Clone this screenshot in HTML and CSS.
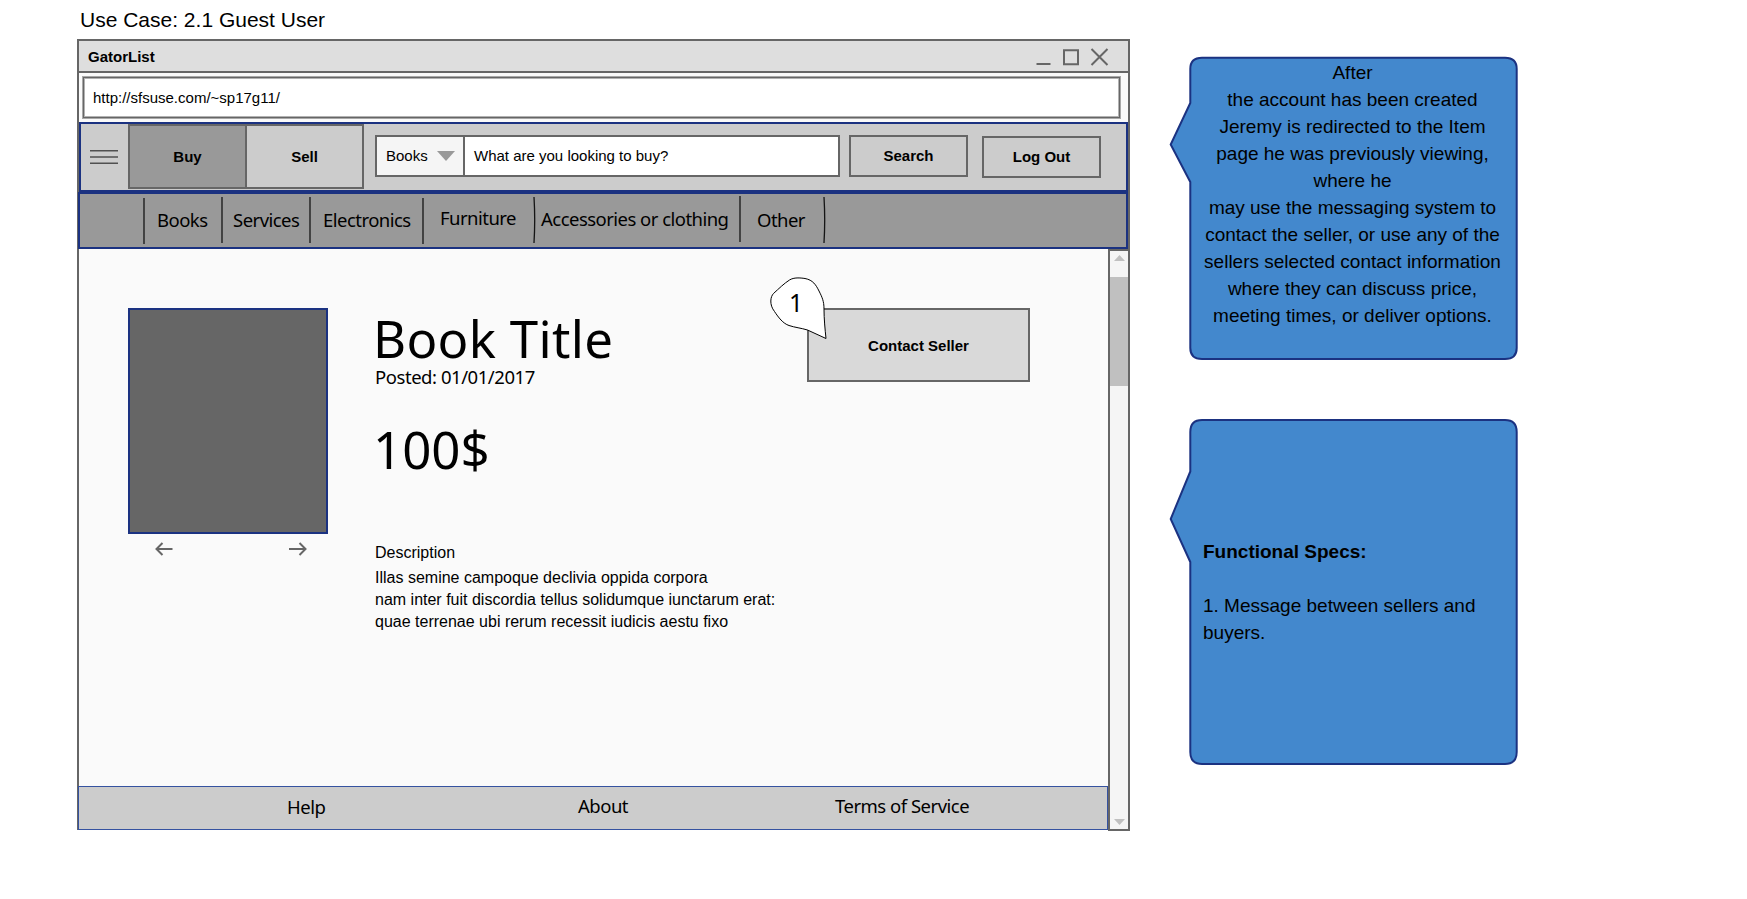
FILE: index.html
```html
<!DOCTYPE html>
<html lang="en">
<head>
<meta charset="utf-8">
<title>GatorList</title>
<link rel="stylesheet" href="styles.css">
</head>
<body>
<div class="page">
  <main class="wireframe">
    <h1 class="use-case">Use Case: 2.1 Guest User</h1>
    <div class="window">
      <div class="titlebar">
        <span class="app-name">GatorList</span>
        <svg class="window-controls" width="73" height="18" viewBox="0 0 73 18">
          <path d="M0.5 16H14.5M28 2.2h14v14H28z" fill="none" stroke="#666" stroke-width="2"/>
          <path d="M55.5 1 L71.5 17M71.5 1 L55.5 17" stroke="#666" stroke-width="2"/>
        </svg>
      </div>
      <div class="urlbar">http://sfsuse.com/~sp17g11/</div>
      <div class="toolbar">
        <svg class="menu-icon" width="28" height="14" viewBox="0 0 28 14">
          <path d="M0 .8H28M0 7H28M0 13.2H28" stroke="#505050" stroke-width="1.5"/>
        </svg>
        <div class="tabs">
          <div class="tab tab-active">Buy</div>
          <div class="tab">Sell</div>
        </div>
        <div class="search-box">
          <div class="category">Books
            <svg width="18" height="10" viewBox="0 0 18 10"><path d="M0 0H18L9 10z" fill="#999"/></svg>
          </div>
          <div class="query">What are you looking to buy?</div>
        </div>
        <div class="button search">Search</div>
        <div class="button logout">Log Out</div>
      </div>
      <nav class="categories">
        <svg class="rule rule-1" width="4" height="46" viewBox="0 0 4 46"><path d="M2 0V46"/></svg>
        <span class="cat cat-books">Books</span>
        <svg class="rule" width="4" height="46" viewBox="0 0 4 46"><path d="M2 0V46"/></svg>
        <span class="cat cat-services">Services</span>
        <svg class="rule" width="4" height="46" viewBox="0 0 4 46"><path d="M2 0V46"/></svg>
        <span class="cat cat-electronics">Electronics</span>
        <svg class="rule rule-low" width="4" height="46" viewBox="0 0 4 46"><path d="M2 0V46"/></svg>
        <span class="cat cat-furniture">Furniture</span>
        <svg class="rule" width="4" height="46" viewBox="0 0 4 46"><path d="M2 0Q3.4 23 2 46"/></svg>
        <span class="cat cat-accessories">Accessories or clothing</span>
        <svg class="rule rule-high" width="4" height="46" viewBox="0 0 4 46"><path d="M2 0V46"/></svg>
        <span class="cat cat-other">Other</span>
        <svg class="rule" width="4" height="46" viewBox="0 0 4 46"><path d="M2 0Q3.4 23 2 46"/></svg>
      </nav>
      <div class="viewport">
        <div class="document">
          <section class="item">
            <div class="gallery">
              <div class="photo"></div>
              <div class="arrows">
                <svg width="18" height="14" viewBox="0 0 18 14"><path d="M17.5 7H1.5M7.5 1L1.5 7L7.5 13" fill="none" stroke="#666" stroke-width="2"/></svg>
                <svg width="18" height="14" viewBox="0 0 18 14"><path d="M0 7H16.5M10.5 1L16.5 7L10.5 13" fill="none" stroke="#666" stroke-width="2"/></svg>
              </div>
            </div>
            <div class="details">
              <h2 class="item-title">Book Title</h2>
              <div class="posted">Posted: 01/01/2017</div>
              <div class="price">100$</div>
              <div class="description-label">Description</div>
              <p class="description">Illas semine campoque declivia oppida corpora<br>nam inter fuit discordia tellus solidumque iunctarum erat:<br>quae terrenae ubi rerum recessit iudicis aestu fixo</p>
            </div>
            <div class="contact">Contact Seller
              <div class="marker">
                <svg width="58" height="64" viewBox="0 0 58 64"><path d="M56 61.5 L37.5 53 C31 51 25 50.5 19 48.5 C13 46.5 8.5 40.5 4.5 34.5 C-1 27.5 .5 19.500 3.500 16.500 C9 11.500 14 6.500 19.500 3 C24 .2 30 .8 35 1.500 C43 3 46 8 49 14 C52 20 54 24 54 32 C54 42 55 52 56 61.500z" fill="#fff" stroke="#000" stroke-width="1"/></svg>
                <span class="marker-label">1</span>
              </div>
            </div>
          </section>
          <footer class="footer">
            <span class="foot foot-help">Help</span>
            <span class="foot foot-about">About</span>
            <span class="foot foot-terms">Terms of Service</span>
          </footer>
        </div>
        <div class="scrollbar">
          <svg width="11" height="6" viewBox="0 0 11 6"><path d="M0 6L5.500 0L11 6z" fill="#c0c0c0"/></svg>
          <div class="thumb"></div>
          <svg class="scroll-down" width="11" height="6" viewBox="0 0 11 6"><path d="M0 0H11L5.500 6z" fill="#c0c0c0"/></svg>
        </div>
      </div>
    </div>
  </main>
  <aside class="notes">
    <div class="note note-story">
      <svg class="note-shape" width="350" height="306" viewBox="1169 56 350 306"><path d="M1202 57.800H1505Q1516.700 57.800 1516.700 69V348Q1516.700 359 1505 359H1202Q1190.300 359 1190.300 348V182L1170.700 144.500L1190.300 103V69Q1190.300 57.800 1202 57.800z"/></svg>
      <p class="note-text">After<br>the account has been created<br>Jeremy is redirected to the Item<br>page he was previously viewing,<br>where he<br>may use the messaging system to<br>contact the seller, or use any of the<br>sellers selected contact information<br>where they can discuss price,<br>meeting times, or deliver options.</p>
    </div>
    <div class="note note-specs">
      <svg class="note-shape" width="350" height="348" viewBox="1169 418 350 348"><path d="M1202 420H1505Q1516.700 420 1516.700 432V752Q1516.700 764 1505 764H1202Q1190.300 764 1190.300 752V562L1170.700 519L1190.300 471.500V432Q1190.300 420 1202 420z"/></svg>
      <p class="note-text"><strong>Functional Specs:</strong><br><br>1. Message between sellers and<br>buyers.</p>
    </div>
  </aside>
</div>
</body>
</html>
```
FILE: styles.css
```css
* { box-sizing: border-box; }
body {
  margin: 0;
  background: #fff;
  color: #000;
  font: 15px "Liberation Sans", Arial, sans-serif;
}
svg { display: block; flex: none; }
h1, h2, p { margin: 0; font-weight: normal; }

.page { display: flex; width: 1747px; height: 899px; padding-left: 77px; overflow: hidden; }
.wireframe { width: 1054px; flex: none; }
.use-case { height: 39px; padding: 8px 0 0 3px; font-size: 21px; line-height: 24px; }

/* Browser window */
.window { width: 1053px; border: 2px solid #666; border-bottom: 0; background: #fafafa; height: 791px; }
.titlebar {
  display: flex; align-items: center; justify-content: space-between;
  height: 32px; padding: 0 19px 0 9px;
  background: #dedede; border-bottom: 2px solid #666; font-weight: bold;
}
.window-controls { margin-top: 1px; }
.urlbar {
  width: 1039px; height: 43px; margin: 3px 0 3px 3px; padding-left: 10px;
  line-height: 42px; background: #fff; border: 1px solid #a8a8a8;
  box-shadow: inset 0 0 0 1px #666, inset 0 0 0 2px #b2b2b2;
}
.toolbar {
  display: flex; align-items: flex-start; height: 70px;
  background: #ccc; border: 2px solid #1b3281;
}
.menu-icon { margin: 26px 10px 0 9px; }
.tabs { display: flex; width: 236px; height: 65px; border: 2px solid #666; font-weight: bold; }
.tab { flex: 1; line-height: 62px; text-align: center; }
.tab-active { background: #999; border-right: 2px solid #666; }
.search-box {
  display: flex; width: 465px; height: 42px; margin: 11px 0 0 11px;
  border: 2px solid #666; background: #fff; line-height: 38px;
}
.category {
  display: flex; align-items: center; justify-content: space-between;
  width: 88px; padding: 0 8px 0 9px; background: #f5f5f5; border-right: 2px solid #666;
}
.query { padding-left: 9px; }
.button {
  width: 119px; height: 42px; border: 2px solid #666;
  line-height: 38px; text-align: center; font-weight: bold;
}
.search { margin: 11px 14px 0 9px; }
.logout { margin-top: 12px; }

.categories {
  display: flex; align-items: flex-start; width: 1050px; height: 57px;
  margin-left: -1px; padding-top: 3px;
  background: #999; border: 2px solid #1b3281;
  font: 18.5px/46px "Noto Sans", sans-serif; letter-spacing: -0.53px;
}
.rule { stroke: #151515; stroke-width: 1.3; fill: none; }
.rule-1 { margin: 1px 0 0 62px; }
.rule-low { margin-top: 1px; }
.rule-high { margin-top: -1px; }
.cat { flex: none; white-space: nowrap; }
.cat-books { width: 74px; padding-left: 11px; }
.cat-services { width: 84px; padding-left: 9px; }
.cat-electronics { width: 109px; padding-left: 11px; }
.cat-furniture { width: 107px; padding-left: 15px; margin-top: -2px; }
.cat-accessories { width: 202px; padding-left: 5px; margin-top: -1px; }
.cat-other { width: 80px; padding-left: 15px; }

/* Page content */
.viewport { display: flex; height: 582px; }
.document { width: 1029px; flex: none; }
.item { display: flex; align-items: flex-start; height: 537px; padding: 59px 0 0 49px; }
.gallery { width: 200px; flex: none; }
.photo { height: 226px; background: #666; border: 2px solid #1b3281; }
.arrows { display: flex; justify-content: space-between; padding: 8px 21px 0 27px; }
.details { width: 433px; margin: 2px 0 0 45px; flex: none; white-space: nowrap; }
.item-title { font: 51px/56px "Noto Sans", sans-serif; letter-spacing: 0.3px; }
.posted { padding-left: 2px; margin-top: 1px; font: 18.5px/20px "Noto Sans", sans-serif; letter-spacing: -0.45px; }
.price { margin-top: 32px; font: 51px/60px "Noto Sans", sans-serif; }
.description-label { margin-top: 63px; padding-left: 2px; font-size: 16px; line-height: 22px; }
.description { margin-top: 3px; padding-left: 2px; font-size: 16px; line-height: 22px; }
.contact {
  position: relative; width: 223px; height: 74px; margin-left: 1px;
  background: #d9d9d9; border: 2px solid #666;
  line-height: 71px; text-align: center; font-weight: bold;
}
.marker { position: absolute; left: -39px; top: -33px; }
.marker-label {
  position: absolute; left: 0; top: 9px; width: 52px;
  font: 24.500px/34px "Noto Sans", sans-serif; text-align: center;
}
.footer {
  display: flex; height: 44px; margin-left: -1px; background: #ccc; border: 1px solid #3552a0;
  font: 18.5px/40px "Noto Sans", sans-serif; letter-spacing: -0.5px; white-space: nowrap;
}
.foot-help { width: 291px; margin-left: 208px; }
.foot-about { width: 257px; }
.foot-about, .foot-terms { margin-top: -1px; }
.scrollbar {
  width: 22px; height: 582px; padding: 4px 0 4px;
  display: flex; flex-direction: column; align-items: center;
  background: #f5f5f5; border: 2px solid #666; flex: none;
}
.thumb { width: 18px; height: 109px; margin-top: 16px; background: #c0c0c0; }
.scroll-down { margin-top: auto; }

/* Annotation callouts */
.notes { padding: 57px 0 0 59px; }
.note { position: relative; width: 327px; font-size: 19px; line-height: 27px; white-space: nowrap; }
.note-shape { position: absolute; left: -21px; top: -1px; fill: #4388cd; stroke: #1b3281; stroke-width: 2; }
.note-text { position: relative; }
.note-story { height: 303px; padding: 2px 2px 0 0; text-align: center; }
.note-specs { height: 346px; margin-top: 59px; padding: 119px 0 0 13px; }
```
